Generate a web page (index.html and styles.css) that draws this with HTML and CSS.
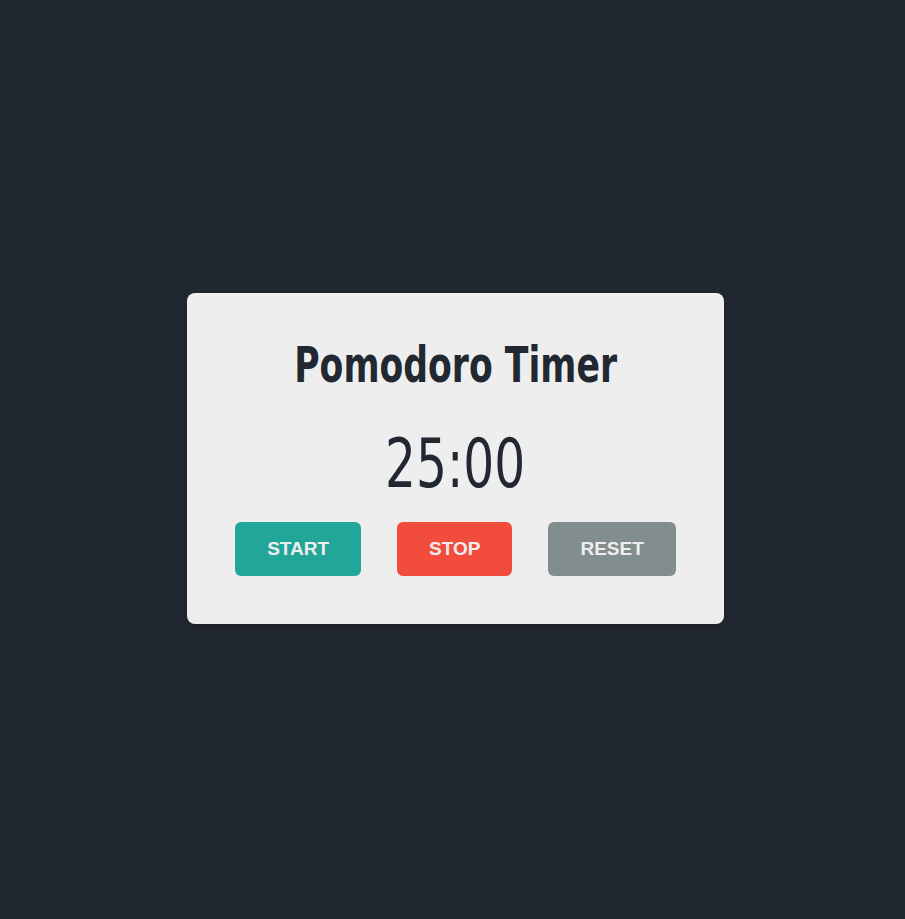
FILE: index.html
```html
<!DOCTYPE html>
<html lang="en">
<head>
<meta charset="utf-8">
<title>Pomodoro Timer</title>
<link rel="stylesheet" href="styles.css">
</head>
<body>
<main class="card">
  <h1 class="title">Pomodoro Timer</h1>
  <div class="timer">25:00</div>
  <div class="controls">
    <button class="btn btn-start">START</button>
    <button class="btn btn-stop">STOP</button>
    <button class="btn btn-reset">RESET</button>
  </div>
</main>
</body>
</html>
```
FILE: styles.css
```css
html, body {
  margin: 0;
  height: 100%;
}
body {
  background: #222831;
  display: flex;
  align-items: center;
  justify-content: center;
  padding: 0 0 2px 6px;
  box-sizing: border-box;
  font-family: "DejaVu Sans Condensed", "DejaVu Sans", sans-serif;
}
.card {
  width: 537px;
  box-sizing: border-box;
  background: #eeeeee;
  border-radius: 8px;
  box-shadow: 0 2px 8px rgba(0, 0, 0, 0.2);
  padding: 42px 0 48px;
  display: flex;
  flex-direction: column;
  align-items: center;
  color: #222831;
}
.title {
  margin: 0;
  font-size: 50px;
  font-weight: 700;
  line-height: 60px;
  transform: scaleX(0.77);
}
.timer {
  margin-top: 34px;
  font-size: 68px;
  font-weight: 400;
  line-height: 70px;
  transform: scaleX(0.795);
}
.controls {
  margin-top: 23px;
  display: flex;
  justify-content: center;
  gap: 36px;
}
.btn {
  border: none;
  border-radius: 6px;
  height: 54px;
  padding: 0 32px;
  font-family: "Liberation Sans", Arial, sans-serif;
  font-weight: 700;
  font-size: 19px;
  color: #eeeeee;
  cursor: pointer;
}
.btn-start { background: #22a699; }
.btn-stop { background: #f24c3d; }
.btn-reset { background: #828d8d; }
```
